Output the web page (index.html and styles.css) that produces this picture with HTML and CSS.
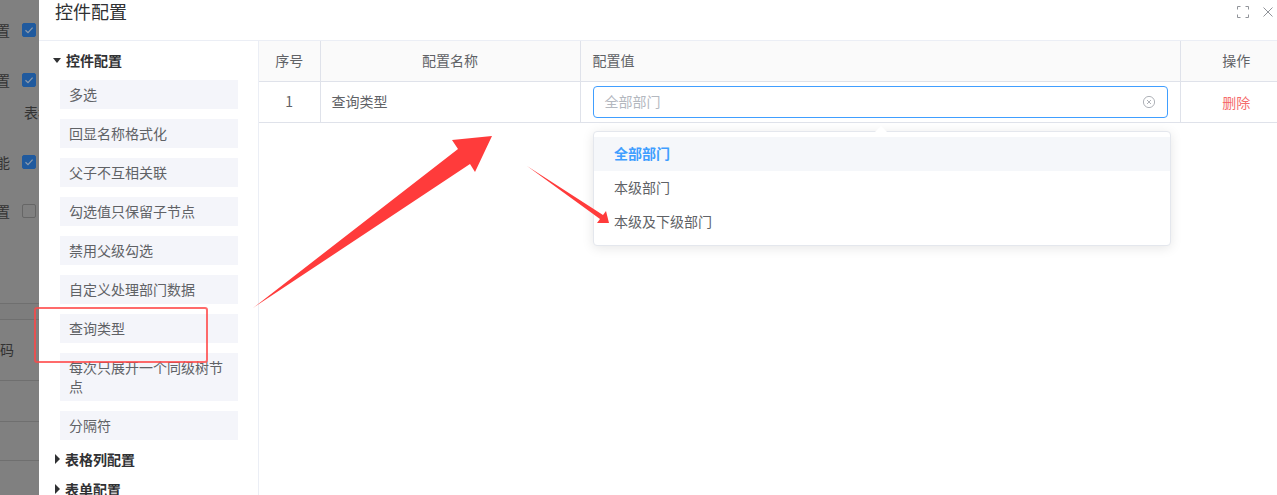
FILE: index.html
```html
<!DOCTYPE html>
<html lang="zh-CN">
<head>
<meta charset="utf-8">
<title>控件配置</title>
<link rel="stylesheet" href="styles.css">
</head>
<body>
<div class="page">
  <div class="backdrop">
    <div class="bg-form">
      <div class="bg-row"><span class="bg-label"><span>配置</span></span><span class="bg-check on"><svg viewBox="0 0 14 14" width="14" height="14"><path d="M3.5 7.2 6 9.6l4.6-5" class="tick"/></svg></span></div>
      <div class="bg-row r2"><span class="bg-label"><span>配置</span></span><span class="bg-check on"><svg viewBox="0 0 14 14" width="14" height="14"><path d="M3.5 7.2 6 9.6l4.6-5" class="tick"/></svg></span></div>
      <div class="bg-row r3"><span class="bg-text">表格</span></div>
      <div class="bg-row r2"><span class="bg-label"><span>功能</span></span><span class="bg-check on"><svg viewBox="0 0 14 14" width="14" height="14"><path d="M3.5 7.2 6 9.6l4.6-5" class="tick"/></svg></span></div>
      <div class="bg-row r5"><span class="bg-label"><span>配置</span></span><span class="bg-check"></span></div>
    </div>
    <div class="bg-table">
      <div class="bg-line h1"></div>
      <div class="bg-line h2"><span class="bg-code">码</span></div>
      <div class="bg-line h3"></div>
      <div class="bg-line h4"></div>
      <div class="bg-line h5"></div>
    </div>
  </div>

  <div class="dialog">
    <header class="dlg-head">
      <h2 class="dlg-title">控件配置</h2>
      <div class="dlg-tools">
        <svg class="ico-full" width="12" height="12" viewBox="0 0 12 12"><path d="M.5 3.5V.5h3M8.5.5h3v3M11.5 8.5v3h-3M3.500 11.500h-3v-3"/></svg>
        <svg class="ico-close" width="10" height="10" viewBox="0 0 10 10"><path d="M.5.5l9 9M9.500.5l-9 9"/></svg>
      </div>
    </header>
    <div class="dlg-body">
      <aside class="side">
        <div class="group-title"><span class="caret down"></span>控件配置</div>
        <ul class="opt-list">
          <li class="opt">多选</li>
          <li class="opt">回显名称格式化</li>
          <li class="opt">父子不互相关联</li>
          <li class="opt">勾选值只保留子节点</li>
          <li class="opt">禁用父级勾选</li>
          <li class="opt">自定义处理部门数据</li>
          <li class="opt">查询类型</li>
          <li class="opt">每次只展开一个同级树节点</li>
          <li class="opt">分隔符</li>
        </ul>
        <div class="group-title closed"><span class="caret right"></span>表格列配置</div>
        <div class="group-title closed"><span class="caret right"></span>表单配置</div>
      </aside>
      <main class="main">
        <table class="cfg">
          <colgroup><col class="c1"><col class="c2"><col class="c3"><col class="c4"></colgroup>
          <thead>
            <tr><th>序号</th><th>配置名称</th><th class="left">配置值</th><th>操作</th></tr>
          </thead>
          <tbody>
            <tr>
              <td class="center">1</td>
              <td class="name">查询类型</td>
              <td class="input-cell">
                <div class="select">
                  <span class="placeholder">全部部门</span>
                  <svg class="ico-clear" width="14" height="14" viewBox="0 0 14 14"><circle cx="7" cy="7" r="5.6"/><path d="M5 5l4 4M9 5 5 9"/></svg>
                </div>
              </td>
              <td class="center del">删除</td>
            </tr>
          </tbody>
        </table>
        <div class="popper">
          <span class="popper-arrow"></span>
          <ul class="pop-list">
            <li class="pop-item active">全部部门</li>
            <li class="pop-item">本级部门</li>
            <li class="pop-item">本级及下级部门</li>
          </ul>
        </div>
      </main>
    </div>
  </div>

  <div class="mark-rect"></div>
  <svg class="marks" width="1277" height="495" viewBox="0 0 1277 495">
    <path d="M253 308 458 149 452 140 492 136 475 172 470 164Z" fill="#ff3b3b"/>
    <path d="M527 166 603 215 606 211 609 223 597 223 600 219Z" fill="#ff3b3b"/>
  </svg>
</div>
</body>
</html>
```
FILE: styles.css
```css
* { box-sizing: border-box; }
html, body { margin: 0; padding: 0; }
body {
  width: 1277px;
  height: 495px;
  overflow: hidden;
  background: #fff;
  font-family: "Noto Sans CJK SC", "Liberation Sans", sans-serif;
  font-size: 14px;
  color: #606266;
}
ul { list-style: none; margin: 0; padding: 0; }

.page { position: relative; display: flex; width: 1277px; height: 495px; overflow: hidden; }

/* dimmed page behind the dialog */
.backdrop { width: 39px; flex: none; height: 100%; background: #808080; overflow: hidden; color: #333; }
.bg-form { height: 303px; padding-top: 20px; }
.bg-row { display: flex; align-items: center; height: 20px; }
.bg-row.r2 { margin-top: 30px; }
.bg-row.r3 { margin-top: 12px; }
.bg-row.r5 { margin-top: 29px; }
.bg-label { display: flex; justify-content: flex-end; width: 10px; flex: none; white-space: nowrap; line-height: 20px; }
.bg-text { padding-left: 24px; white-space: nowrap; }
.bg-code { margin-top: -2px; }
.bg-check { width: 14px; height: 14px; margin-left: 12px; border-radius: 2px; border: 1px solid #666; background: #808080; flex: none; }
.bg-check svg { display: block; margin: -1px; }
.bg-check.on { background: #205a9e; border-color: #205a9e; }
.tick { fill: none; stroke: #8d9aab; stroke-width: 1.2; }
.bg-table { display: flex; flex-direction: column; }
.bg-line { border-top: 1px solid #6f6f6f; display: flex; align-items: center; }
.h1 { height: 16px; background: #7d7d7d; }
.h2 { height: 61px; }
.h3 { height: 41px; }
.h4 { height: 39px; }
.h5 { height: 40px; }

/* dialog */
.dialog { flex: 1; min-width: 0; height: 100%; background: #fff; display: flex; flex-direction: column; }
.dlg-head { height: 41px; flex: none; border-bottom: 1px solid #ebeef5; display: flex; justify-content: space-between; padding: 0 4px 0 16px; }
.dlg-title { margin: 0; font-size: 18px; font-weight: 400; line-height: 22px; color: #303133; }
.dlg-tools { display: flex; gap: 14px; padding-top: 6px; align-items: flex-start; }
.ico-full, .ico-close { display: block; fill: none; stroke: #909399; stroke-width: 1; }
.ico-close { margin-top: 1px; }

.dlg-body { flex: 1; min-height: 0; display: flex; }
.side { width: 220px; flex: none; border-right: 1px solid #ebeef5; padding: 8px 20px 0 14px; overflow: hidden; }
.group-title { display: flex; align-items: center; height: 22px; font-weight: 700; font-size: 14px; color: #303133; line-height: 22px; white-space: nowrap; }
.group-title.closed + .group-title.closed { margin-top: 8px; }
.caret { width: 0; height: 0; margin-right: 5px; flex: none; border-style: solid; border-color: transparent; }
.caret.down { border-width: 5px 4px 0; border-top-color: #303133; }
.caret.right { border-width: 5px 0 5px 5px; border-left-color: #303133; margin-left: 2px; margin-right: 5px; }
.opt-list { padding: 9px 0 8px 7px; display: flex; flex-direction: column; gap: 10px; }
.opt { background: #f4f5fa; padding: 5px 9px; line-height: 19px; min-height: 29px; color: #606266; }

.main { flex: 1; min-width: 0; position: relative; overflow: hidden; }
.cfg { width: 1033px; border-collapse: collapse; table-layout: fixed; }
.c1 { width: 61px; }
.c2 { width: 260px; }
.c3 { width: 600px; }
.c4 { width: 112px; }
.cfg th { height: 40px; padding: 0 0 2px; background: #fafafa; font-weight: 400; text-align: center; color: #606266; border-bottom: 1px solid #dfe2ea; border-right: 1px solid #dfe2ea; }
.cfg th.left { text-align: left; padding-left: 12px; }
.cfg td { height: 41px; padding: 0 12px; border-bottom: 1px solid #dfe2ea; border-right: 1px solid #dfe2ea; color: #606266; }
.cfg td.name { padding: 0 12px 2px 11px; }
.cfg th:last-child, .cfg td:last-child { border-right: 0; }
.cfg td.center { text-align: center; padding: 0 0 2px; }
.cfg td.del { color: #f56c6c; padding: 0; }
.select { display: flex; align-items: center; justify-content: space-between; width: 575px; height: 32px; border: 1px solid #409eff; border-radius: 4px; padding: 0 11px; }
.placeholder { color: #b4b8bf; margin-top: -2px; }
.ico-clear { fill: none; stroke: #b0b3b9; stroke-width: 1; }

.popper { position: absolute; left: 334px; top: 90px; width: 578px; height: 115px; background: #fff; border: 1px solid #e4e7ed; border-radius: 4px; box-shadow: 0 2px 12px rgba(0,0,0,.1); padding: 5px 0; }
.popper-arrow { position: absolute; top: -6px; left: 281px; width: 0; height: 0; border-left: 6px solid transparent; border-right: 6px solid transparent; border-bottom: 6px solid #fff; }
.pop-item { height: 34px; line-height: 32px; padding: 0 20px; color: #606266; }
.pop-item.active { background: #f5f7fa; color: #409eff; font-weight: 700; }

/* annotations drawn over the screenshot */
.mark-rect { position: absolute; left: 34px; top: 307px; width: 174px; height: 56px; border: 2px solid rgba(255,70,70,.8); border-radius: 3px; }
.marks { position: absolute; left: 0; top: 0; pointer-events: none; }
```
